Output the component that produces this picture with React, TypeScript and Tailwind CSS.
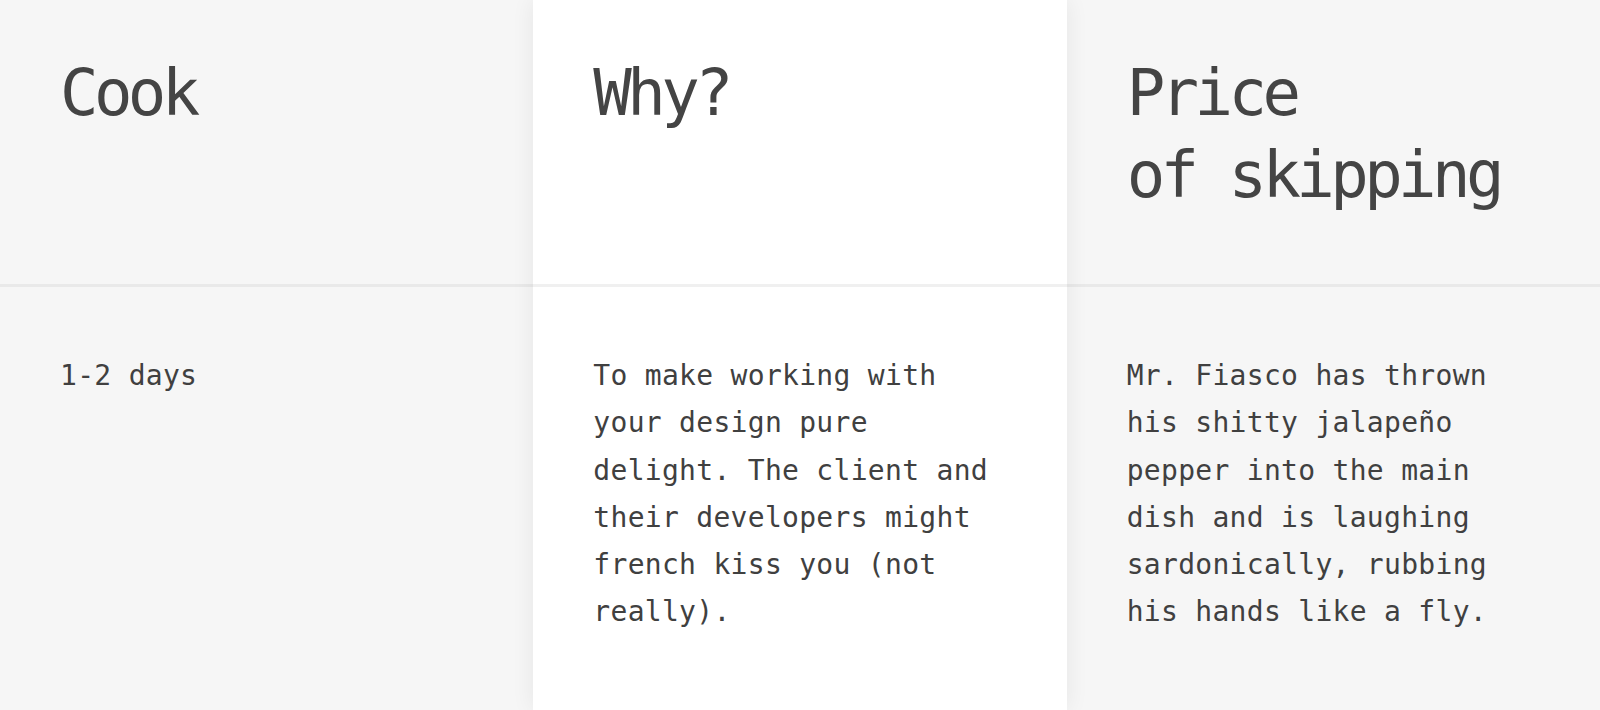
import React from 'react';

type Column = {
  title: React.ReactNode;
  body: string;
  highlight?: boolean;
};

const columns: Column[] = [
  { title: 'Cook', body: '1-2 days' },
  {
    title: 'Why?',
    body: 'To make working with your design pure delight. The client and their developers might french kiss you (not really).',
    highlight: true,
  },
  {
    title: (
      <>
        Price
        <br />
        of skipping
      </>
    ),
    body: 'Mr. Fiasco has thrown his shitty jalapeño pepper into the main dish and is laughing sardonically, rubbing his hands like a fly.',
  },
];

const App: React.FC = () => {
  return (
    <div className="grid min-h-screen grid-cols-3 bg-[#f6f6f6] font-['DejaVu_Sans_Mono',monospace]">
      {columns.map((col, i) => (
        <div
          key={i}
          className={
            col.highlight
              ? 'relative z-10 flex flex-col bg-white shadow-[0_0_22px_rgba(0,0,0,0.07)]'
              : 'flex flex-col'
          }
        >
          <div
            className={
              col.highlight
                ? 'h-[287px] border-b-[3px] border-[#f0f0f0] pl-[60px] pr-[40px] pt-[52px]'
                : 'h-[287px] border-b-[3px] border-[#e9e9e9] pl-[60px] pr-[40px] pt-[52px]'
            }
          >
            <h2 className="text-[64px] leading-[82px] tracking-[-4.6px] text-[#444]">{col.title}</h2>
          </div>
          <div className="pl-[60px] pr-[40px] pt-[65px] pb-16">
            <p className="max-w-[412px] text-[28px] leading-[47.3px] tracking-[0.3px] text-[#404040]">
              {col.body}
            </p>
          </div>
        </div>
      ))}
    </div>
  );
};

export default App;
